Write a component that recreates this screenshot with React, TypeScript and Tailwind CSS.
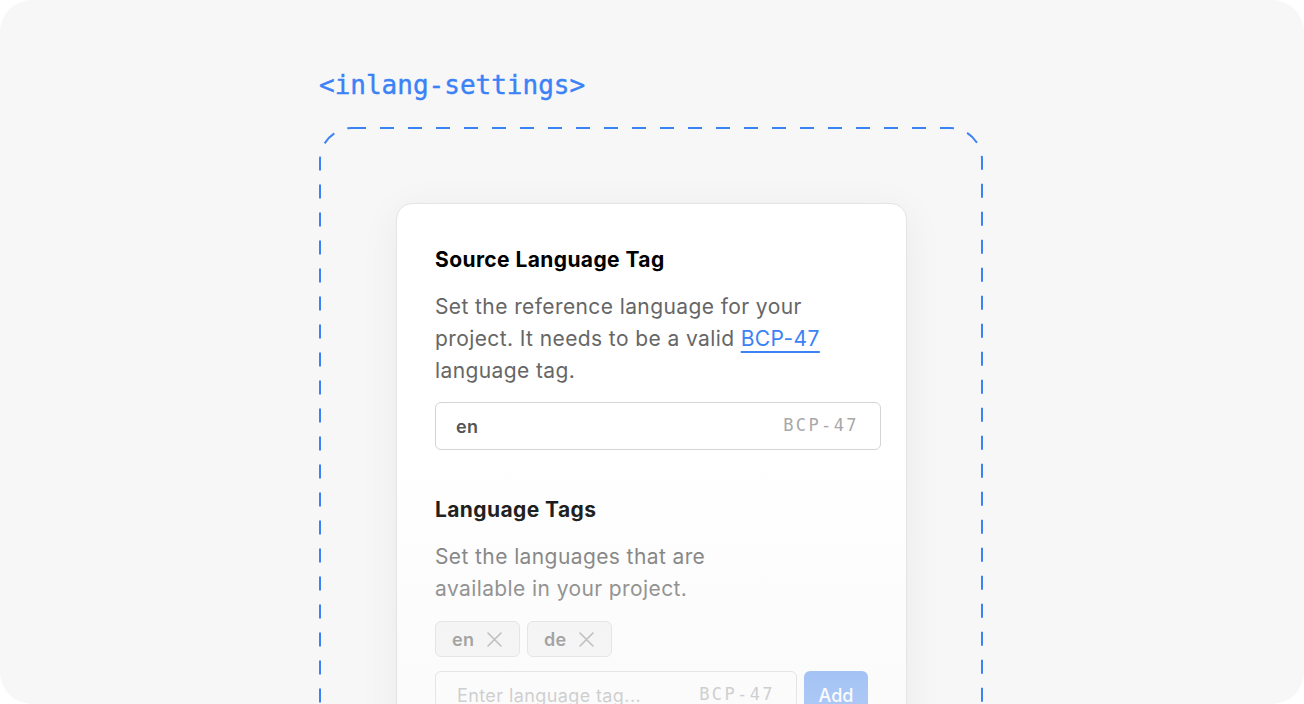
import React from "react";

function XIcon() {
  return (
    <svg width="17" height="17" viewBox="0 0 17 17" fill="none" stroke="#9a9a9a" strokeWidth="1.6" strokeLinecap="round">
      <path d="M2 2L15 15M15 2L2 15" />
    </svg>
  );
}

function Chip({ label }: { label: string }) {
  return (
    <div className="flex h-[36px] w-[85px] items-center gap-[12px] rounded-[6px] border border-[#d9d9d9] bg-[#f3f3f3] pl-[16px]">
      <span className="text-[18px] font-semibold tracking-[0.3px] text-[#6b6b6b]">{label}</span>
      <XIcon />
    </div>
  );
}

export default function App() {
  return (
    <div className="h-[704px] w-[1304px] bg-white" style={{ fontFamily: "Inter, 'Noto Sans', sans-serif" }}>
      <div className="flex h-full w-full flex-col overflow-hidden rounded-[32px] bg-[#f7f7f7] pl-[319px] pt-[69px]">
        <div
          className="h-[32px] text-[26px] leading-[32px] text-[#3b82f6]"
          style={{ fontFamily: "'DejaVu Sans Mono', 'Liberation Mono', monospace", WebkitTextStroke: "0.4px #3b82f6" }}
        >
          {"<inlang-settings>"}
        </div>
        <div className="relative mt-[26px] h-[700px] w-[664px] shrink-0 pl-[77px] pt-[76px]">
          <svg className="pointer-events-none absolute left-0 top-0" width="664" height="700" viewBox="0 0 664 700" fill="none">
            <rect x="1" y="1" width="662" height="698" rx="32" stroke="#3b82f6" strokeWidth="2" strokeDasharray="14 14" />
          </svg>
          <div className="relative h-[560px] w-[511px] overflow-hidden rounded-[16px] border border-[#e4e4e4] bg-white pl-[38px] pr-[25px] pt-[42px] shadow-[0_8px_40px_rgba(0,0,0,0.06)]">
            <div className="text-[21px] font-bold leading-[28px] tracking-[0.4px] text-black">Source Language Tag</div>
            <div className="mt-[17px] text-[21px] leading-[32px] tracking-[0.4px] text-[#666666]">
              <span className="block">Set the reference language for your</span>
              <span className="block">
                project. It needs to be a valid{" "}
                <span className="text-[#3b82f6] underline decoration-[1.5px] underline-offset-[5px]">BCP-47</span>
              </span>
              <span className="block">language tag.</span>
            </div>
            <div className="mt-[15px] flex h-[48px] w-[446px] items-center justify-between rounded-[6px] border border-[#d4d4d4] bg-white pl-[20px] pr-[21px]">
              <span className="text-[18px] font-semibold tracking-[0.3px] text-[#555555]">en</span>
              <span
                className="text-[17px] tracking-[2.4px] text-[#a8a8a8]"
                style={{ fontFamily: "'DejaVu Sans Mono', 'Liberation Mono', monospace" }}
              >
                BCP-47
              </span>
            </div>

            <div className="mt-[46px] text-[21px] font-bold leading-[28px] tracking-[0.4px] text-black">Language Tags</div>
            <div className="mt-[17px] text-[21px] leading-[32px] tracking-[0.4px] text-[#666666]">
              <span className="block">Set the languages that are</span>
              <span className="block">available in your project.</span>
            </div>
            <div className="mt-[16px] flex gap-[7px]">
              <Chip label="en" />
              <Chip label="de" />
            </div>
            <div className="mt-[14px] flex gap-[7px]">
              <div className="flex h-[48px] w-[362px] items-center justify-between rounded-[6px] border border-[#d4d4d4] bg-white pl-[21px] pr-[21px]">
                <span className="text-[18px] tracking-[0.4px] text-[#a8a8a8]">Enter language tag...</span>
                <span
                  className="text-[17px] tracking-[2.4px] text-[#a8a8a8]"
                  style={{ fontFamily: "'DejaVu Sans Mono', 'Liberation Mono', monospace" }}
                >
                  BCP-47
                </span>
              </div>
              <div className="flex h-[48px] w-[64px] items-center justify-center rounded-[6px] bg-[#5f97f3] text-[18px] font-medium text-white">
                Add
              </div>
            </div>
            <div className="pointer-events-none absolute bottom-0 left-0 right-0 top-[250px] bg-gradient-to-b from-[#f7f7f7]/0 via-[#f7f7f7]/35 to-[#f7f7f7]/60" />
          </div>
        </div>
      </div>
    </div>
  );
}
